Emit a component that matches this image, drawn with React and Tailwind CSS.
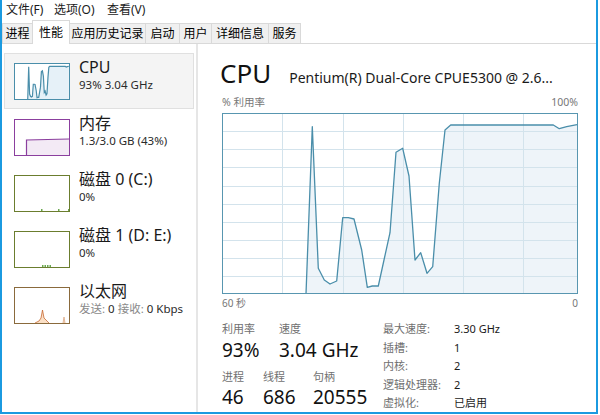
import React from "react";

const cpuPts = [
  [84, 181], [90.3, 13.7], [96.3, 155.3], [102.3, 167], [108, 171], [114.7, 168],
  [120.7, 104.7], [126.3, 104.7], [132, 106], [139.7, 137], [145.3, 174.3],
  [150.3, 173], [156.3, 173], [162, 147], [168, 119.7], [174, 39.3], [180.7, 35.3],
  [187, 63], [193, 147], [198.7, 139.7], [205, 160.3], [210.7, 153.7], [217.3, 70.3],
  [223, 17], [228.7, 12], [331.3, 12], [337.3, 15.7], [344.7, 13.7], [355, 11.7],
];
const cpuLine = cpuPts.map((p) => p.join(",")).join(" ");
const cpuArea = `${cpuLine} 355,181 84,181`;

function CpuGraph() {
  const vx = [60, 121, 181, 241, 301];
  const hy = [18, 36, 54, 73, 91, 109, 127, 145, 163];
  return (
    <svg width="356" height="181" viewBox="0 0 356 181" className="block">
      <rect x="0" y="0" width="356" height="181" fill="#ffffff" />
      <polygon points={cpuArea} fill="#eef4f9" />
      {vx.map((x) => (
        <line key={"v" + x} x1={x + 0.5} x2={x + 0.5} y1="1" y2="180" stroke="#d3e3ec" strokeWidth="1" />
      ))}
      {hy.map((y) => (
        <line key={"h" + y} x1="1" x2="355" y1={y + 0.5} y2={y + 0.5} stroke="#d3e3ec" strokeWidth="1" />
      ))}
      <polyline points={cpuLine} fill="none" stroke="#4a8eaa" strokeWidth="1.3" strokeLinejoin="round" />
      <rect x="0.5" y="0.5" width="355" height="180" fill="none" stroke="#5896b0" strokeWidth="1" />
    </svg>
  );
}

function Thumb({ color, children }) {
  return (
    <div className="w-[56px] h-[37px] border shrink-0 bg-white" style={{ borderColor: color }}>
      <svg width="54" height="35" viewBox="0 0 54 35" className="block">
        {children}
      </svg>
    </div>
  );
}

function CpuMini() {
  return (
    <Thumb color="#4a8eaa">
      <svg x="0" y="0" width="54" height="35" viewBox="0 0 356 181" preserveAspectRatio="none">
        <polygon points={cpuArea} fill="#e6f1f8" />
        <polyline points={cpuLine} fill="none" stroke="#4a8eaa" strokeWidth="1.2" vectorEffect="non-scaling-stroke" />
      </svg>
    </Thumb>
  );
}

function MemMini() {
  return (
    <Thumb color="#8b3f9e">
      <polygon points="11.5,35 11.5,20 54,19 54,35" fill="#f3eaf5" />
      <polyline points="11.5,35 11.5,20 54,19" fill="none" stroke="#8b3f9e" strokeWidth="1.2" />
    </Thumb>
  );
}

function DiskMini({ ticks }) {
  return (
    <Thumb color="#6b7d2e">
      {ticks.map((x) => (
        <rect key={x} x={x} y="33" width="1.5" height="2" fill="#6aa84f" />
      ))}
    </Thumb>
  );
}

function NetMini() {
  return (
    <Thumb color="#8a6a3c">
      <polygon points="20,35 24,33 26,30 27.5,22 29,30 31,32 34,35" fill="#fbe0c6" />
      <polyline points="20,35 24,33 26,30 27.5,22 29,30 31,32 34,35" fill="none" stroke="#c86a34" strokeWidth="0.8" />
      <polygon points="48,35 49,29 50,35" fill="#fbe0c6" />
      <polyline points="48,35 49,29 50,35" fill="none" stroke="#d9a07a" strokeWidth="0.7" />
    </Thumb>
  );
}

function SideItem({ selected, thumb, title, sub }) {
  return (
    <div
      className={
        "ml-[2px] w-[190px] h-[56px] flex pl-[9px] " +
        (selected ? "bg-[#f4f4f4] border border-[#e0e0e0]" : "border border-transparent")
      }
    >
      <div className="pt-[9px]">{thumb}</div>
      <div className="ml-[9px] pt-[3px] flex flex-col">
        <div className="text-[16px] leading-[20px] text-[#1a1a1a] whitespace-nowrap">{title}</div>
        <div className="text-[11.5px] leading-[16px] text-[#2a2a2a] whitespace-nowrap">{sub}</div>
      </div>
    </div>
  );
}

const tabs = [
  { t: "进程", w: "w-[31px]" },
  { t: "性能", w: "w-[38px]", active: true },
  { t: "应用历史记录", w: "w-[77px]" },
  { t: "启动", w: "w-[35px]" },
  { t: "用户", w: "w-[33px]" },
  { t: "详细信息", w: "w-[58px]" },
  { t: "服务", w: "w-[33px]" },
];

export default function App() {
  return (
    <div className="w-[600px] h-[415px] bg-white overflow-hidden font-['Noto_Sans','Noto_Sans_CJK_SC',sans-serif]">
      <div className="w-[598px] h-[414px] border-l-2 border-r-2 border-b-2 border-[#1b9ae0] flex flex-col bg-white">
        {/* menu bar */}
        <div className="h-[20px] flex items-center pl-[4px] text-[12px] text-[#1a1a1a] leading-[20px]">
          <span className="w-[48px]">文件(F)</span>
          <span className="w-[53px]">选项(O)</span>
          <span>查看(V)</span>
        </div>
        {/* tabs */}
        <div className="h-[24px] flex items-end pl-[1px] border-b border-[#d9d9d9]">
          {tabs.map((tb) =>
            tb.active ? (
              <div
                key={tb.t}
                className={tb.w + " h-[24px] -mb-px -ml-px relative z-10 bg-white border-l border-t border-r border-[#d9d9d9] flex items-center justify-center text-[12px] leading-none text-black"}
              >
                {tb.t}
              </div>
            ) : (
              <div
                key={tb.t}
                className={tb.w + " h-[20px] -ml-px bg-[#f0f0f0] border-l border-t border-r border-[#d9d9d9] flex items-center justify-center text-[12px] leading-none text-black"}
              >
                {tb.t}
              </div>
            )
          )}
        </div>
        {/* body */}
        <div className="flex-1 flex min-h-0">
          {/* sidebar */}
          <div className="w-[196px] shrink-0 border-r-2 border-[#e6e6e6] pt-[9px] flex flex-col">
            <SideItem selected thumb={<CpuMini />} title="CPU" sub="93%  3.04 GHz" />
            <SideItem thumb={<MemMini />} title="内存" sub="1.3/3.0 GB (43%)" />
            <SideItem thumb={<DiskMini ticks={[26, 43, 53]} />} title="磁盘 0 (C:)" sub="0%" />
            <SideItem thumb={<DiskMini ticks={[27, 29.5, 32, 34.5]} />} title="磁盘 1 (D: E:)" sub="0%" />
            <SideItem
              thumb={<NetMini />}
              title="以太网"
              sub={
                <span>
                  <span className="text-[#8a8a8a]">发送:</span> 0{" "}
                  <span className="text-[#8a8a8a]">接收:</span> 0 Kbps
                </span>
              }
            />
          </div>
          {/* main */}
          <div className="flex-1 pl-[24px] pr-[18px] flex flex-col">
            <div className="mt-[16px] h-[26px] flex items-baseline whitespace-nowrap">
              <span className="text-[26px] leading-[26px] text-[#111] -ml-[2px]">CPU</span>
              <span className="ml-[18px] text-[14px] text-[#1a1a1a]">Pentium(R) Dual-Core CPUE5300 @ 2.6...</span>
            </div>
            <div className="mt-[9px] h-[14px] flex justify-between items-center text-[10.5px] leading-[14px] text-[#777]">
              <span>% 利用率</span>
              <span>100%</span>
            </div>
            <div className="mt-[4px]">
              <CpuGraph />
            </div>
            <div className="mt-[3px] h-[12px] flex justify-between items-center text-[10px] leading-[12px] text-[#777]">
              <span>60 秒</span>
              <span>0</span>
            </div>
            <div className="mt-[11px] flex">
              <div className="w-[161px] pt-[1px] flex flex-col">
                <div className="flex h-[16px] text-[11px] leading-[16px] text-[#707070]">
                  <span className="w-[57px]">利用率</span>
                  <span>速度</span>
                </div>
                <div className="flex h-[26px] items-center text-[19px] leading-[26px] text-[#111] whitespace-nowrap">
                  <span className="w-[57px]">93%</span>
                  <span>3.04 GHz</span>
                </div>
                <div className="mt-[6px] flex h-[16px] text-[11px] leading-[16px] text-[#707070]">
                  <span className="w-[41px]">进程</span>
                  <span className="w-[50px]">线程</span>
                  <span>句柄</span>
                </div>
                <div className="flex h-[24px] items-center text-[19px] leading-[24px] text-[#111]">
                  <span className="w-[41px]">46</span>
                  <span className="w-[50px]">686</span>
                  <span>20555</span>
                </div>
              </div>
              <div className="flex flex-col text-[11px]">
                {[
                  ["最大速度:", "3.30 GHz"],
                  ["插槽:", "1"],
                  ["内核:", "2"],
                  ["逻辑处理器:", "2"],
                  ["虚拟化:", "已启用"],
                ].map(([k, v]) => (
                  <div key={k} className="flex h-[18.5px] items-center leading-[18px]">
                    <span className="w-[71px] text-[#707070] whitespace-nowrap">{k}</span>
                    <span className="text-[#1a1a1a]">{v}</span>
                  </div>
                ))}
              </div>
            </div>
          </div>
        </div>
      </div>
    </div>
  );
}
